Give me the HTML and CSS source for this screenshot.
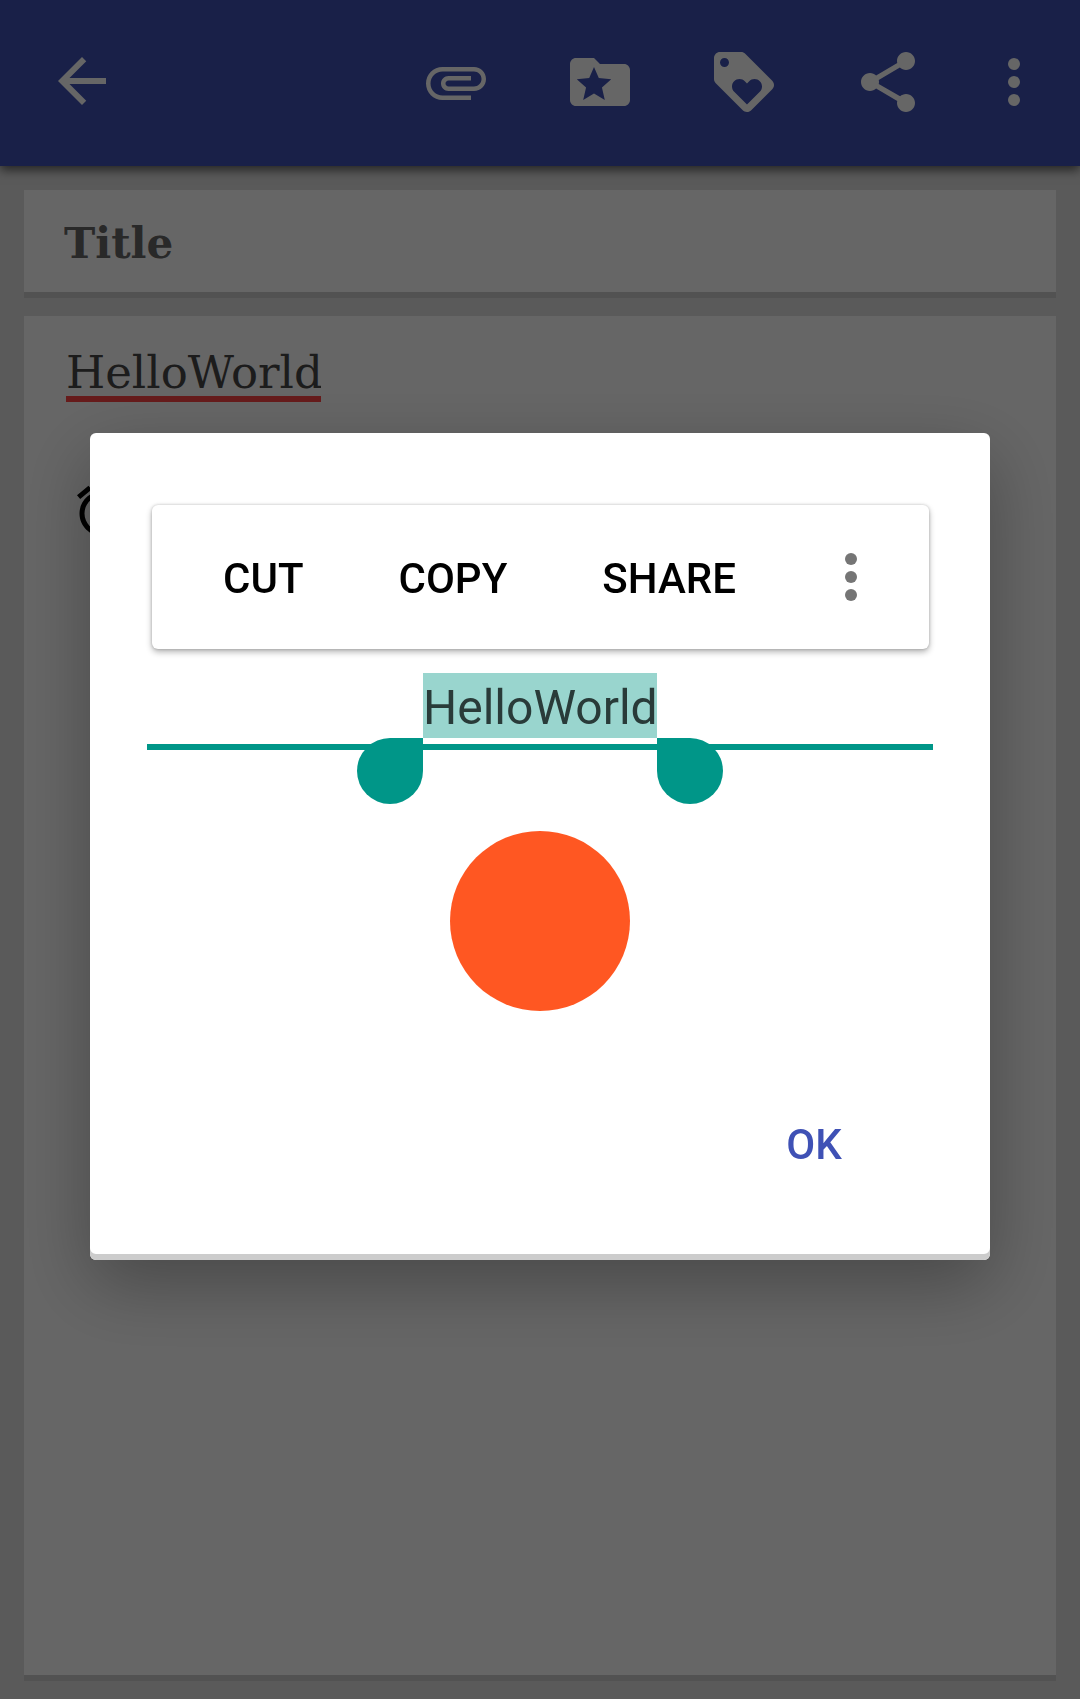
FILE: index.html
```html
<!DOCTYPE html>
<html lang="en">
<head>
<meta charset="utf-8">
<meta name="viewport" content="width=device-width, initial-scale=1">
<title>Note</title>
<link rel="stylesheet" href="styles.css">
</head>
<body>
<div class="app">
  <header class="app-bar">
    <button class="bar-button" type="button" aria-label="Back">
      <svg class="icon" viewBox="0 0 24 24"><path d="M20 10.7H7.83l5.59-5.59L12 3.7l-8 8 8 8 1.41-1.41L7.83 12.7H20v-2z"/></svg>
    </button>
    <div class="bar-actions">
      <button class="bar-button" type="button" aria-label="Attach">
        <svg class="icon" viewBox="0 0 24 24"><path d="M7.5 18C4.46 18 2 15.54 2 12.5S4.46 7 7.5 7H18c2.21 0 4 1.79 4 4s-1.79 4-4 4H9.5C8.12 15 7 13.88 7 12.5S8.12 10 9.5 10H17v1.5H9.5c-.55 0-1 .45-1 1s.45 1 1 1H18c1.38 0 2.5-1.12 2.5-2.5S19.38 8.5 18 8.5H7.5c-2.21 0-4 1.79-4 4s1.79 4 4 4H17V18H7.5z"/></svg>
      </button>
      <button class="bar-button" type="button" aria-label="Category">
        <svg class="icon" viewBox="0 0 24 24"><path fill-rule="evenodd" d="M20 6h-8l-2-2H4c-1.1 0-2 .9-2 2v12c0 1.1.9 2 2 2h16c1.1 0 2-.9 2-2V8c0-1.1-.9-2-2-2zM10 7l1.6 3.7 4.15.4-3.1 2.75.95 4.15-3.6-2.15L6.4 18l.95-4.15-3.1-2.75 4.15-.4z"/></svg>
      </button>
      <button class="bar-button" type="button" aria-label="Tags">
        <svg class="icon" viewBox="0 0 24 24"><path d="M21.41 11.58l-9-9C12.05 2.22 11.55 2 11 2H4c-1.1 0-2 .9-2 2v7c0 .55.22 1.05.59 1.42l9 9c.36.36.86.58 1.41.58s1.05-.22 1.41-.59l7-7c.37-.36.59-.86.59-1.41s-.23-1.06-.59-1.42zM5.5 7C4.67 7 4 6.33 4 5.5S4.67 4 5.5 4 7 4.67 7 5.5 6.33 7 5.5 7zm11.77 8.27L13 19.54l-4.27-4.27C8.28 14.81 8 14.19 8 13.5c0-1.38 1.12-2.5 2.5-2.5.69 0 1.32.28 1.77.74l.73.72.73-.73c.45-.45 1.08-.73 1.77-.73 1.38 0 2.5 1.12 2.5 2.5 0 .69-.28 1.32-.73 1.77z"/></svg>
      </button>
      <button class="bar-button" type="button" aria-label="Share note">
        <svg class="icon" viewBox="0 0 24 24"><path d="M18 16c-.76 0-1.44.3-1.96.77L8.91 12.7c.05-.23.09-.46.09-.7s-.04-.47-.09-.7l7.05-4.11c.54.5 1.25.81 2.04.81 1.66 0 3-1.34 3-3s-1.34-3-3-3-3 1.34-3 3c0 .24.04.47.09.7L8.04 9.81C7.5 9.31 6.79 9 6 9c-1.66 0-3 1.34-3 3s1.34 3 3 3c.79 0 1.5-.31 2.04-.81l7.05 4.11c-.06.23-.09.46-.09.7 0 1.66 1.34 3 3 3s3-1.34 3-3-1.34-3-3-3z"/></svg>
      </button>
      <button class="bar-button bar-button-narrow" type="button" aria-label="More">
        <svg class="icon" viewBox="0 0 24 24"><circle cx="12" cy="6" r="2"/><circle cx="12" cy="12" r="2"/><circle cx="12" cy="18" r="2"/></svg>
      </button>
    </div>
  </header>
  <main class="note">
    <section class="card">
      <input class="note-title" type="text" aria-label="Title" value="Title">
    </section>
    <section class="card card-body">
      <input class="note-text" type="text" aria-label="Note text" value="HelloWorld">
      <svg class="reminder-icon" viewBox="0 0 24 24"><path d="M22 5.72l-4.6-3.86-1.29 1.53 4.6 3.86L22 5.72zM7.88 3.39L6.6 1.86 2 5.71l1.29 1.53 4.59-3.85zM12.5 8H11v6l4.75 2.85.75-1.23-4-2.37V8zM12 4c-4.97 0-9 4.03-9 9s4.02 9 9 9c4.97 0 9-4.03 9-9s-4.03-9-9-9zm0 16c-3.87 0-7-3.13-7-7s3.13-7 7-7 7 3.13 7 7-3.13 7-7 7z"/></svg>
    </section>
  </main>
</div>

<div class="scrim">
  <div class="dialog" role="dialog" aria-modal="true" aria-label="Edit tag">
    <div class="edit-bar" role="toolbar" aria-label="Text actions">
      <button class="edit-button" type="button">CUT</button>
      <button class="edit-button" type="button">COPY</button>
      <button class="edit-button" type="button">SHARE</button>
      <button class="edit-more" type="button" aria-label="More text actions">
        <svg class="icon" viewBox="0 0 24 24"><circle cx="12" cy="6" r="2"/><circle cx="12" cy="12" r="2"/><circle cx="12" cy="18" r="2"/></svg>
      </button>
    </div>
    <div class="field">
      <div class="selection">
        <input class="tag-input" type="text" aria-label="Tag name" value="HelloWorld">
        <span class="handle handle-start"></span>
        <span class="handle handle-end"></span>
      </div>
    </div>
    <button class="color-button" type="button" aria-label="Tag colour"></button>
    <div class="dialog-actions">
      <button class="ok-button" type="button">OK</button>
    </div>
  </div>
</div>
</body>
</html>
```

FILE: styles.css
```css
* {
  box-sizing: border-box;
}

body {
  margin: 0;
  background: #e0e0e0;
  font-family: Roboto, "Liberation Sans", sans-serif;
}

button,
input {
  margin: 0;
  padding: 0;
  border: 0;
  background: none;
  font-family: inherit;
  outline: none;
}

button {
  cursor: pointer;
}

.icon {
  display: block;
  width: 72px;
  height: 72px;
  fill: currentColor;
}

.app {
  display: flex;
  flex-direction: column;
  min-height: 100vh;
}

/* App bar */

.app-bar {
  display: flex;
  justify-content: space-between;
  position: relative;
  padding: 0 12px 2px 10px;
  background: #3f51b5;
  color: #fff;
  box-shadow: 0 4px 10px rgba(0, 0, 0, 0.6);
}

.bar-actions {
  display: flex;
}

.bar-button {
  display: flex;
  align-items: center;
  justify-content: center;
  width: 144px;
  height: 164px;
  color: inherit;
}

.bar-button-narrow {
  width: 108px;
}

/* Note */

.note {
  display: flex;
  flex: 1;
  flex-direction: column;
  gap: 18px;
  padding: 24px 24px 18px;
}

.card {
  padding: 20px 40px;
  border-bottom: 6px solid #ccc;
  background: #fff;
}

.card-body {
  display: flex;
  flex: 1;
  flex-direction: column;
  align-items: flex-start;
  gap: 79px;
  padding: 26px 42px;
}

.note-title,
.note-text {
  display: block;
  font-family: "Roboto Slab", "DejaVu Serif", serif;
}

.note-title {
  width: 100%;
  height: 62px;
  padding-top: 4px;
  color: #666;
  font-size: 42px;
  font-weight: 700;
}

.note-text {
  width: 255px;
  height: 60px;
  padding-top: 6px;
  border-bottom: 6px solid #f44;
  color: #484848;
  font-size: 45px;
  line-height: 48px;
}

.reminder-icon {
  width: 60px;
  height: 60px;
  margin-left: 6px;
}

/* Dialog */

.scrim {
  display: grid;
  position: fixed;
  inset: 0;
  align-items: center;
  padding: 0 90px 6px;
  background: rgba(0, 0, 0, 0.6);
}

.dialog {
  display: flex;
  flex-direction: column;
  padding: 72px 57px 48px;
  border-radius: 6px;
  background: #fff;
  box-shadow: inset 0 -6px #ccc, 0 24px 72px rgba(0, 0, 0, 0.3);
}

.edit-bar {
  display: flex;
  align-items: center;
  height: 144px;
  margin: 0 4px 0 5px;
  padding: 0 24px;
  border-radius: 6px;
  box-shadow: 0 3px 6px rgba(0, 0, 0, 0.3), 0 0 3px rgba(0, 0, 0, 0.2);
}

.edit-button {
  height: 144px;
  padding: 2px 48px 0 47px;
  color: #000;
  font-size: 42px;
  font-weight: 500;
}

.edit-more {
  display: flex;
  align-items: center;
  justify-content: center;
  width: 108px;
  height: 144px;
  margin-left: auto;
  color: #757575;
}

.field {
  display: flex;
  justify-content: center;
  margin-top: 24px;
  padding-bottom: 6px;
  border-bottom: 6px solid #009688;
}

.selection {
  position: relative;
}

.tag-input {
  display: block;
  width: 234px;
  height: 65px;
  padding-top: 4px;
  background: #99d5ce;
  color: #293b39;
  font-size: 48px;
  text-align: center;
}

.handle {
  position: absolute;
  top: 100%;
  width: 66px;
  height: 66px;
  background: #009688;
}

.handle-start {
  right: 100%;
  border-radius: 33px 0 33px 33px;
}

.handle-end {
  left: 100%;
  border-radius: 0 33px 33px 33px;
}

.color-button {
  align-self: center;
  width: 180px;
  height: 180px;
  margin-top: 81px;
  border-radius: 50%;
  background: #ff5722;
}

.dialog-actions {
  display: flex;
  justify-content: flex-end;
  margin-top: 57px;
  padding: 0 43px;
}

.ok-button {
  width: 152px;
  height: 144px;
  padding-top: 8px;
  color: #3f51b5;
  font-size: 42px;
  font-weight: 500;
}
```
